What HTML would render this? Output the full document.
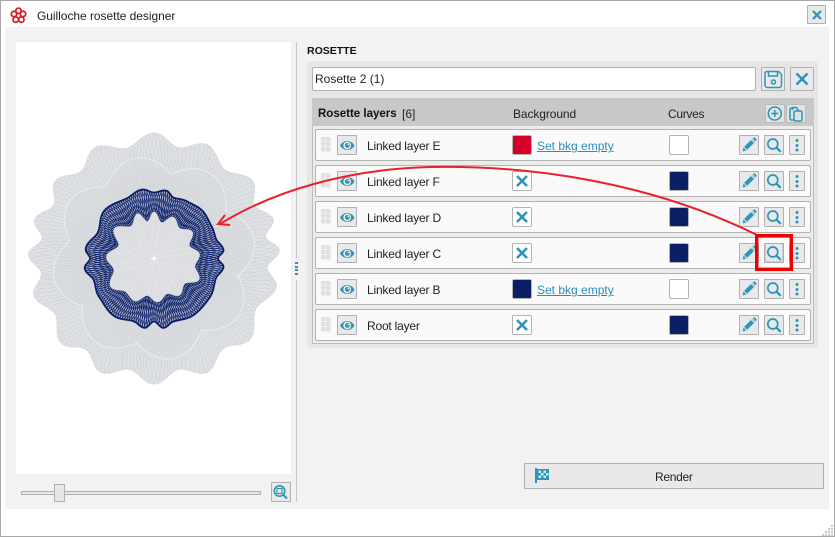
<!DOCTYPE html>
<html><head><meta charset="utf-8"><title>Guilloche rosette designer</title>
<style>
html,body{margin:0;padding:0;background:#fff}
body{width:835px;height:537px;position:relative;overflow:hidden;font-family:"Liberation Sans",sans-serif;font-size:12px;color:#222}
.a{position:absolute}
.win{left:0;top:0;width:833px;height:535px;border:1px solid #a8a8a8;border-width:1px}
.btn{position:absolute;box-sizing:border-box;width:20px;height:20px;background:#e9e9e9;border:1px solid #b0b0b0;border-radius:1px}
.btn svg,.sw svg{position:absolute;left:0;top:0}
.row{position:absolute;left:315px;width:496px;height:32px;box-sizing:border-box;background:#fafafa;border:1px solid #b2b2b2;border-radius:2px}
.sw{position:absolute;box-sizing:border-box;width:20px;height:20px;background:#fff;border:1px solid #b4b4b4;border-radius:2px}
.t{position:absolute;white-space:nowrap;line-height:14px}
.lk{color:#2b8fb3;text-decoration:underline}
</style></head><body>
<div class="a win"></div>
<svg class="a" style="left:10px;top:7px" width="17" height="17" viewBox="0 0 17 17" fill="none" stroke="#d3202c" stroke-width="1.8"><circle cx="8.5" cy="3.8" r="2.7"/><circle cx="13" cy="7" r="2.7"/><circle cx="11.3" cy="12.6" r="2.7"/><circle cx="5.7" cy="12.6" r="2.7"/><circle cx="4" cy="7" r="2.7"/></svg>
<div class="t" style="left:37px;top:9px;letter-spacing:-.04px">Guilloche rosette designer</div>
<div class="btn" style="left:807px;top:5px;width:19px;height:19px"><svg width="18" height="18" fill="none" stroke="#2e94b9" stroke-width="2.2"><path d="M5 5l8 8M13 5l-8 8"/></svg></div>
<div class="a" style="left:6px;top:27px;width:823px;height:482px;background:#f2f2f2"></div>
<div class="a" style="left:16px;top:42px;width:275px;height:432px;background:#fff"></div>
<div class="a" style="left:296px;top:42px;width:1px;height:216px;background:#c6c6c6"></div>
<div class="a" style="left:296px;top:280px;width:1px;height:222px;background:#c6c6c6"></div>
<svg class="a" style="left:295px;top:261px" width="3" height="15" fill="#2e94b9"><rect y="1" width="3" height="2"/><rect y="5" width="3" height="2"/><rect y="8" width="3" height="2"/><rect y="12" width="3" height="2"/></svg>
<svg id="ros" class="a" style="left:16px;top:120px" width="275" height="280" viewBox="16 120 275 280">
<path id="fb" fill="#dfe1e4" d="M154 132L173 145 197 140 212 155 217 150 232 172 253 180 250 208 275 220 265 240 280 248 268 262 278 287 262 300 262 328 235 335 225 358 198 360 175 378 154 385 133 378 110 360 83 358 73 335 46 328 46 300 30 287 40 262 27 248 43 240 33 220 58 208 55 180 76 172 91 150 96 155 111 140 135 145Z"/>
</svg>
<div class="a" style="left:21px;top:491px;width:238px;height:2px;border:1px solid #b2b2b2;background:#e8e8e8"></div>
<div class="a" style="left:54px;top:484px;width:9px;height:16px;border:1px solid #b2b2b2;background:#e6e6e6"></div>
<div class="btn" style="left:271px;top:482px"><svg width="18" height="18" fill="none" stroke="#2e94b9" stroke-width="1.6"><circle cx="7.5" cy="8" r="5.200"/><path d="M11.500 12l3.500 3.500" stroke-width="2"/><rect x="5" y="5.500" width="5" height="5" stroke-width="1.100"/></svg></div>

<div class="t" style="left:307px;top:44px;font-weight:bold;font-size:10.500px;color:#111">ROSETTE</div>
<div class="a" style="left:307px;top:61px;width:511px;height:287px;background:#e6e6e6;border-radius:4px"></div>
<div class="a" style="left:312px;top:67px;width:444px;height:24px;box-sizing:border-box;background:#fff;border:1px solid #b2b2b2;border-radius:2px"></div>
<div class="t" style="left:315px;top:72px">Rosette 2 (1)</div>
<div class="btn" style="left:761px;top:67px;width:24px;height:24px"><svg width="22" height="22" fill="none" stroke="#2e94b9" stroke-width="1.500"><path d="M5 3.500h11.500l3 3v10.500a2.500 2.500 0 0 1-2.500 2.500H5.500A2.500 2.500 0 0 1 3 17V5.500a2 2 0 0 1 2-2z"/><path d="M6.500 3.500v4.500h9v-4.500"/><circle cx="11.500" cy="14" r="2"/></svg></div>
<div class="btn" style="left:790px;top:67px;width:24px;height:24px"><svg width="22" height="22" fill="none" stroke="#2e94b9" stroke-width="2.500"><path d="M5.500 5.500l11 11M16.500 5.500l-11 11"/></svg></div>
<div class="a" style="left:312px;top:98px;width:502px;height:28px;background:#c8c8c8"></div>
<div class="a" style="left:312px;top:126px;width:502px;height:218px;box-sizing:border-box;border:1px solid #bdbdbd;border-top:0;background:#ececec"></div>
<div class="t" style="left:318px;top:107px;font-weight:bold;font-size:11.500px;color:#111">Rosette layers</div>
<div class="t" style="left:402px;top:107px">[6]</div>
<div class="t" style="left:513px;top:107px;letter-spacing:-.1px">Background</div>
<div class="t" style="left:668px;top:107px;letter-spacing:-.3px">Curves</div>
<div class="btn" style="left:765px;top:104px;height:19px;background:#e2e2e2;border-color:#bcbcbc"><svg width="18" height="18" fill="none" stroke="#2e94b9" stroke-width="1.500"><circle cx="8.800" cy="8.500" r="6.500"/><path d="M8.800 5v7M5.300 8.500h7"/></svg></div>
<div class="btn" style="left:786px;top:104px;height:19px;background:#e2e2e2;border-color:#bcbcbc"><svg width="18" height="18" fill="none" stroke="#2e94b9" stroke-width="1.500"><path d="M6.500 3h-2a1.500 1.500 0 0 0-1.500 1.500v9a1.500 1.500 0 0 0 1.500 1.500h2"/><rect x="7" y="6" width="8" height="10" rx="1.500"/><path d="M5.500 5V2.500h4l2 3"/></svg></div>

<div id="rows"></div>
<svg style="display:none"><defs>
<g id="eye"><path d="M2 9.500C5.500 3.500 13 3.500 16.500 9.500 13 15.500 5.500 15.500 2 9.500Z" fill="#2e94b9"/><circle cx="9.200" cy="9.500" r="3.900" fill="#e9e9e9"/><circle cx="9.400" cy="9.400" r="2.400" fill="#2e94b9"/><circle cx="10.300" cy="8.600" r=".8" fill="#e9e9e9"/></g>
<g id="pen"><path d="M2.500 15.500l1.200-4.300 8.300-8.200 3 3-8.300 8.300z" fill="#2e94b9"/><path d="M4 11.300l2.700 2.700M11.300 3.800l2.900 2.900" stroke="#e9e9e9" fill="none"/><path d="M12.800 2.200l.8-.6a1 1 0 0 1 1.300 0l1.500 1.500a1 1 0 0 1 0 1.300l-.8.800z" fill="#2e94b9"/></g>
<g id="mag"><circle cx="7.800" cy="8" r="5" fill="none" stroke="#2e94b9" stroke-width="1.700"/><path d="M11.500 11.700l4.200 4.200" stroke="#2e94b9" stroke-width="2.200"/></g>
<g id="dots" fill="#2e94b9"><circle cx="7" cy="4.500" r="1.500"/><circle cx="7" cy="9.500" r="1.500"/><circle cx="7" cy="14" r="1.500"/></g>
<g id="x"><path d="M4 4l10 10M14 4L4 14" stroke="#2e94b9" stroke-width="2.600" fill="none"/></g>
</defs></svg>
<script>
(function(){
var R=[["Linked layer E","#d4002a",1,"#fff"],["Linked layer F",0,0,"#0a1f66"],["Linked layer D",0,0,"#0a1f66"],["Linked layer C",0,0,"#0a1f66"],["Linked layer B","#0a1f66",1,"#fff"],["Root layer",0,0,"#0a1f66"]];
var h="";
function b(x,y,w,id){return '<div class="btn" style="left:'+x+'px;top:'+y+'px;width:'+w+'px"><svg width="'+(w-2)+'" height="18"><use href="#'+id+'"/></svg></div>';}
R.forEach(function(r,i){var y=129+36*i;
h+='<div class="row" style="top:'+y+'px"></div>';
h+='<svg class="a" style="left:321px;top:'+(y+8)+'px" width="10" height="15" fill="#e0e0e0"><rect width="4.500" height="4.500"/><rect x="5" width="4.500" height="4.500"/><rect y="5" width="4.500" height="4.500"/><rect x="5" y="5" width="4.500" height="4.500"/><rect y="10" width="4.500" height="4.500"/><rect x="5" y="10" width="4.500" height="4.500"/></svg>';
h+=b(337,y+6,20,"eye");
h+='<div class="t" style="left:367px;top:'+(y+10)+'px;letter-spacing:-.2px">'+r[0]+'</div>';
if(r[2]){h+='<div class="sw" style="left:512px;top:'+(y+6)+'px;background:'+r[1]+'"></div><div class="t lk" style="left:537px;top:'+(y+10)+'px">Set bkg empty</div>';}
else{h+='<div class="sw" style="left:512px;top:'+(y+6)+'px"><svg width="18" height="18"><use href="#x"/></svg></div>';}
h+='<div class="sw" style="left:669px;top:'+(y+6)+'px;background:'+r[3]+'"></div>';
h+=b(739,y+6,20,"pen")+b(764,y+6,20,"mag")+b(789,y+6,16,"dots");
});
document.getElementById("rows").innerHTML=h;

var cx=154,cy=258.5,P=Math.PI,ns="http://www.w3.org/2000/svg",S=document.getElementById("ros");
function tab(t){return function(a){a=((a%360)+360)%360;for(var i=0;i<t.length-1;i++){if(a>=t[i][0]&&a<=t[i+1][0]){var f=(a-t[i][0])/(t[i+1][0]-t[i][0]);f=(1-Math.cos(f*P))/2;return t[i][1]+(t[i+1][1]-t[i][1])*f;}}return t[0][1];};}
var L=[0,25,52,72,86,103,130,155,180,205,228,253,272,288,308,332,360],oT=[];
for(var i=0;i<L.length-1;i++){oT.push([L[i],126]);oT.push([(L[i]+L[i+1])/2,114]);}oT.push([360,126]);
var rO=tab(oT);
var rB=tab([[0,66],[10,69],[18,64],[30,66],[45,68],[60,66],[72,65],[83,70],[90,64],[97,70],[108,65],[125,68],[145,69],[163,66],[172,70],[180,63],[188,70],[198,66],[215,70],[235,67],[250,64],[262,70],[270,64],[278,69],[295,62],[315,69],[335,66],[350,70],[360,66]]);
var rI=tab([[0,47],[12,37],[25,46],[40,40],[55,47],[70,38],[85,46],[100,42],[115,50],[130,40],[145,45],[160,38],[175,44],[190,38],[205,47],[220,44],[237,52],[255,42],[272,48],[290,38],[307,50],[325,40],[340,48],[350,38],[360,47]]);
function xy(a,r){var t=(a-90)*P/180;return (cx+r*Math.cos(t)).toFixed(1)+" "+(cy+r*Math.sin(t)).toFixed(1);}
function curve(fn,st){var d="";for(var a=0;a<=360;a+=(st||1)){d+=(a?"L":"M")+xy(a,fn(a));}return d+"Z";}
function add(d,at){var p=document.createElementNS(ns,"path");p.setAttribute("d",d);for(var k in at)p.setAttribute(k,at[k]);S.appendChild(p);}
document.getElementById("fb").setAttribute("d",curve(rO));
function mesh(inn,out,n,fam,col,w){var d="";for(var j=0;j<fam;j++){var ph=j*2*P/fam;var s="";for(var a=0;a<=360;a+=.5){var m=.5+.5*Math.sin(a*P/180*n+ph);s+=(a?"L":"M")+xy(a,inn(a)+(out(a)-inn(a))*m);}d+=s;}add(d,{fill:"none",stroke:col,"stroke-width":w});}
mesh(function(a){return rO(a)*.7},rO,30,6,"#c8cbd0",.4);
var petal=function(a){return 84+16*Math.abs(Math.cos((a+11)*P/180*4))};
add(curve(petal,.5),{fill:"#dcdee1",stroke:"none"});
mesh(function(a){return 66},petal,40,5,"#cbced2",.35);
add(curve(function(a){return petal(a)+2},.5),{fill:"none",stroke:"#eeeff1","stroke-width":1,opacity:.8});
add(curve(rB,.5),{fill:"#a9afc8",stroke:"none"});
add(curve(rI,.5),{fill:"#dcdee1",stroke:"none"});
mesh(rI,rB,30,6,"#0a1f66",.7);
add(curve(rB,.5),{fill:"none",stroke:"#0a1f66","stroke-width":1.8});
add(curve(rI,.5),{fill:"#dcdee1",stroke:"#6a76a4","stroke-width":.4});
var d="";for(var a=0;a<360;a+=36){d+="M"+xy(a,3)+"L"+xy(a+10,rI(a+10)-3)+"M"+xy(a+18,14)+"Q"+xy(a+36,28)+" "+xy(a+36,rI(a+36)-4);}
add(d,{fill:"none",stroke:"#e7e8ea","stroke-width":.6});
add("M151 258.500h6M154 255.500v6",{stroke:"#fff","stroke-width":1.4,fill:"none"});
})();
</script>

<div class="btn" style="left:524px;top:463px;width:300px;height:26px"></div>
<svg class="a" style="left:535px;top:468px" width="15" height="16"><path d="M1 0v15" stroke="#2e94b9" stroke-width="2"/><path d="M2 1h12v11H2z" fill="#2e94b9"/><g fill="#d8ecf3"><rect x="3.500" y="2.500" width="2.500" height="2.500"/><rect x="8.500" y="2.500" width="2.500" height="2.500"/><rect x="6" y="5" width="2.500" height="2.500"/><rect x="11" y="5" width="2.500" height="2.500"/><rect x="3.500" y="7.500" width="2.500" height="2.500"/><rect x="8.500" y="7.500" width="2.500" height="2.500"/></g></svg>
<div class="t" style="left:655px;top:470px;letter-spacing:-.3px">Render</div>
<svg class="a" style="left:822px;top:524px" width="12" height="12" fill="#c4c9d2"><rect x="9" y="1" width="2" height="2"/><rect x="6" y="4" width="2" height="2"/><rect x="9" y="4" width="2" height="2"/><rect x="3" y="7" width="2" height="2"/><rect x="6" y="7" width="2" height="2"/><rect x="9" y="7" width="2" height="2"/><rect y="10" width="2" height="2"/><rect x="3" y="10" width="2" height="2"/><rect x="6" y="10" width="2" height="2"/><rect x="9" y="10" width="2" height="2"/></svg>

<svg class="a" style="left:0;top:0;pointer-events:none" width="835" height="537" fill="none">
<path d="M757 235C650 182 530 165 430 167 350 169 275 190 220 224" stroke="#e8222c" stroke-width="2"/>
<path d="M225 215L218 224 230 225" stroke="#e8222c" stroke-width="2"/>
<rect x="756.700" y="235.700" width="34.600" height="33.600" stroke="#f00000" stroke-width="3.400"/>
<rect x="765.500" y="243.500" width="17" height="18" stroke="#8fb5c4" stroke-width=".8" stroke-dasharray="1.500 1"/>
</svg>
</body></html>
